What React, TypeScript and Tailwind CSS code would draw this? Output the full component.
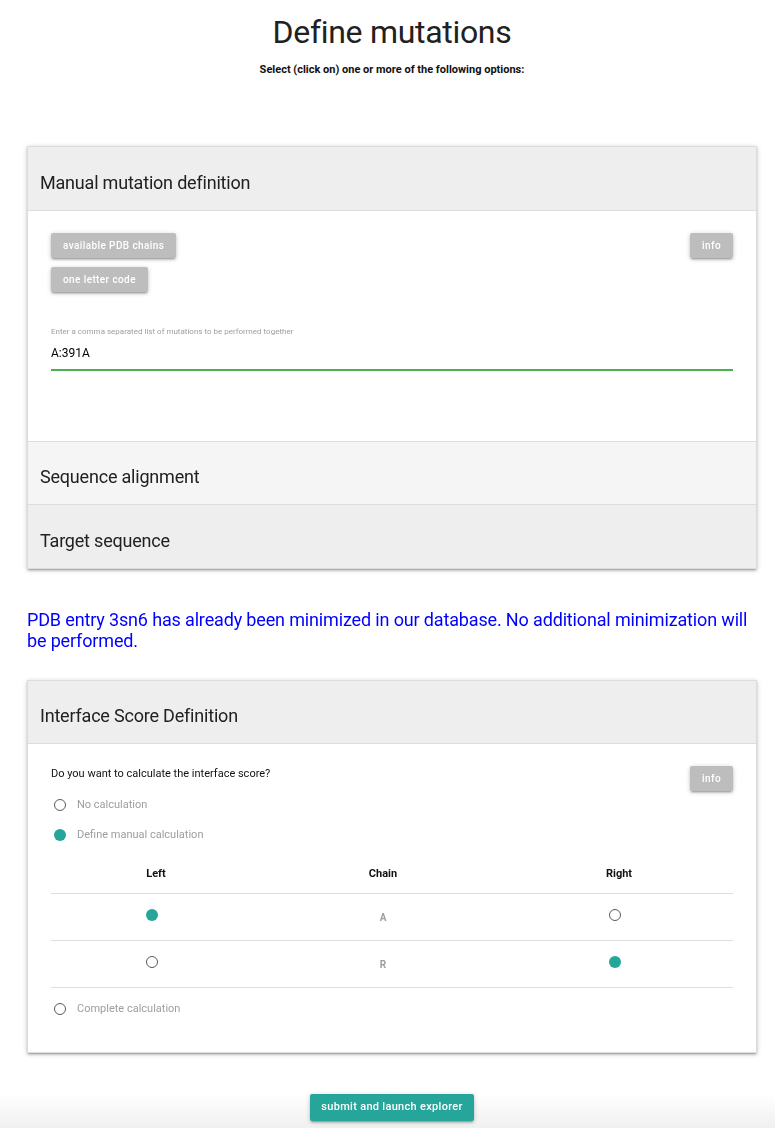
import React from 'react';

const font = { fontFamily: 'Roboto, "Liberation Sans", sans-serif' };

const raised =
  'shadow-[0_2px_2px_0_rgba(0,0,0,0.14),0_3px_1px_-2px_rgba(0,0,0,0.12),0_1px_5px_0_rgba(0,0,0,0.2)]';

const GreyButton = ({ label }: { label: string }) => (
  <button className={`h-[25px] px-[12px] rounded-[2px] bg-[#bdbdbd] text-white text-[10px] font-medium tracking-[0.4px] ${raised}`}>
    {label}
  </button>
);

const Radio = ({ checked }: { checked: boolean }) =>
  checked ? (
    <span className="inline-block w-[12px] h-[12px] rounded-full bg-[#26a69a]" />
  ) : (
    <span className="inline-block w-[12px] h-[12px] rounded-full border-[1.5px] border-[#5a5a5a]" />
  );

const RadioRow = ({ checked, label }: { checked: boolean; label: string }) => (
  <div className="h-[30px] flex items-center gap-[11px] pl-[3px]">
    <Radio checked={checked} />
    <span className="text-[11px] text-[#9e9e9e]">{label}</span>
  </div>
);

const CardHeader = ({ title, bg, h }: { title: string; bg: string; h: string }) => (
  <div className={`${h} ${bg} flex items-center px-[12px] pt-[7px] text-[18px] tracking-[-0.2px]`}>{title}</div>
);

const chains = [
  { chain: 'A', left: true },
  { chain: 'R', left: false },
];

export default function App() {
  return (
    <div style={font} className="min-h-screen bg-white text-[#212121] pl-[27px] pr-[18px] pb-[7px]">
      <div className="fixed bottom-0 left-0 right-0 h-[34px] bg-gradient-to-b from-white to-[#f0f0f0] pointer-events-none z-0" />

      <h1 className="pt-[12px] text-center text-[32px] leading-[40px] font-normal tracking-[-0.3px] text-[#212121]">
        Define mutations
      </h1>
      <p className="mt-[10px] text-center text-[11px] leading-[16px] font-bold text-[#111]">
        Select (click on) one or more of the following options:
      </p>

      <div className="mt-[68px] relative z-10">
        {/* mutation definition */}
        <div className={`border border-[#dddddd] bg-white ${raised}`}>
          <div className="border-b border-[#dddddd]">
            <CardHeader title="Manual mutation definition" bg="bg-[#eeeeee]" h="h-[63px]" />
          </div>
          <div className="h-[230px] px-[23px] pt-[22px]">
            <div className="flex justify-between items-start">
              <div className="flex flex-col items-start gap-[9px]">
                <GreyButton label="available PDB chains" />
                <GreyButton label="one letter code" />
              </div>
              <GreyButton label="info" />
            </div>
            <div className="mt-[35px] text-[8px] leading-[10px] text-[#9e9e9e]">
              Enter a comma separated list of mutations to be performed together
            </div>
            <div className="h-[34px] border-b-2 border-[#4caf50] flex items-center text-[12px] text-black">
              A:391A
            </div>
          </div>
          <div className="border-t border-[#dddddd]">
            <CardHeader title="Sequence alignment" bg="bg-[#f5f5f5]" h="h-[62px]" />
          </div>
          <div className="border-t border-[#dddddd]">
            <CardHeader title="Target sequence" bg="bg-[#eeeeee]" h="h-[63px]" />
          </div>
        </div>

        <p className="mt-[40px] text-[18px] leading-[21px] tracking-[-0.15px] text-[#0000ff]">
          PDB entry 3sn6 has already been minimized in our database. No additional minimization will be performed.
        </p>

        {/* interface score */}
        <div className={`mt-[29px] border border-[#dddddd] bg-white ${raised}`}>
          <div className="border-b border-[#dddddd]">
            <CardHeader title="Interface Score Definition" bg="bg-[#eeeeee]" h="h-[62px]" />
          </div>
          <div className="px-[23px] pt-[22px] pb-[22px]">
            <div className="h-[24px] flex justify-between items-start">
              <span className="text-[11px] leading-[16px] text-[#111]">Do you want to calculate the interface score?</span>
              <GreyButton label="info" />
            </div>
            <RadioRow checked={false} label="No calculation" />
            <RadioRow checked={true} label="Define manual calculation" />

            <div className="mt-[4px]">
              <div className="grid grid-cols-[210px_244px_1fr] h-[40px] items-center pt-[1px] text-[11px] font-bold text-[#111] text-center border-b border-[#dddddd]">
                <span>Left</span>
                <span>Chain</span>
                <span>Right</span>
              </div>
              {chains.map((c) => (
                <div
                  key={c.chain}
                  className="grid grid-cols-[210px_244px_1fr] h-[47px] items-center text-center border-b border-[#dddddd]"
                >
                  <span className="flex justify-center pr-[8px] -mt-[4px]">
                    <Radio checked={c.left} />
                  </span>
                  <span className="text-[10px] font-bold text-[#9e9e9e]">{c.chain}</span>
                  <span className="flex justify-center pr-[8px] -mt-[4px]">
                    <Radio checked={!c.left} />
                  </span>
                </div>
              ))}
            </div>
            <div className="h-[42px] flex items-center gap-[11px] pl-[3px]">
              <Radio checked={false} />
              <span className="text-[11px] text-[#9e9e9e]">Complete calculation</span>
            </div>
          </div>
        </div>

        <div className="mt-[41px] flex justify-center">
          <button className={`h-[27px] w-[164px] rounded-[2px] bg-[#26a69a] text-white text-[11px] font-medium tracking-[0.3px] ${raised}`}>
            submit and launch explorer
          </button>
        </div>
      </div>
    </div>
  );
}
